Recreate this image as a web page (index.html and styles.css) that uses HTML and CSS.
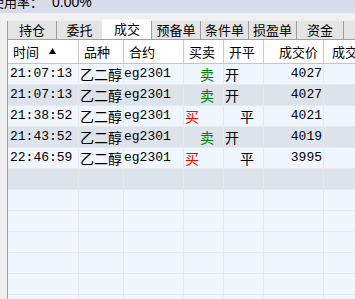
FILE: index.html
```html
<!DOCTYPE html>
<html>
<head>
<meta charset="utf-8">
<link rel="stylesheet" href="styles.css">
</head>
<body>
<div class="topbar"><span class="toptext">使用率：<span class="pct">0.00%</span></span></div>
<div class="tabs">
  <div class="tab w49">持仓</div>
  <div class="tab w46">委托</div>
  <div class="tab sel w49">成交</div>
  <div class="tab w49">预备单</div>
  <div class="tab w48">条件单</div>
  <div class="tab w48">损盈单</div>
  <div class="tab w47">资金</div>
  <div class="tab w48"></div>
</div>
<div class="grid">
  <div class="row head">
    <div class="c c1 h">时间<svg class="arrow" width="7" height="6" viewBox="0 0 7 6"><polygon points="3.5,0 7,6 0,6" fill="#000"/></svg></div>
    <div class="c c2 h">品种</div>
    <div class="c c3 h">合约</div>
    <div class="c c4 h">买卖</div>
    <div class="c c5 h">开平</div>
    <div class="c c6 h hr">成交价</div>
    <div class="c c7 h hl">成交量</div>
  </div>
  <div class="row">
    <div class="c c1 t">21:07:13</div><div class="c c2 zh">乙二醇</div><div class="c c3 t">eg2301</div>
    <div class="c c4 zh sell">卖</div><div class="c c5 zh">开</div><div class="c c6 t num">4027</div><div class="c c7"></div>
  </div>
  <div class="row alt">
    <div class="c c1 t">21:07:13</div><div class="c c2 zh">乙二醇</div><div class="c c3 t">eg2301</div>
    <div class="c c4 zh sell">卖</div><div class="c c5 zh">开</div><div class="c c6 t num">4027</div><div class="c c7"></div>
  </div>
  <div class="row">
    <div class="c c1 t">21:38:52</div><div class="c c2 zh">乙二醇</div><div class="c c3 t">eg2301</div>
    <div class="c c4 zh buy">买</div><div class="c c5 zh close">平</div><div class="c c6 t num">4021</div><div class="c c7"></div>
  </div>
  <div class="row alt">
    <div class="c c1 t">21:43:52</div><div class="c c2 zh">乙二醇</div><div class="c c3 t">eg2301</div>
    <div class="c c4 zh sell">卖</div><div class="c c5 zh">开</div><div class="c c6 t num">4019</div><div class="c c7"></div>
  </div>
  <div class="row">
    <div class="c c1 t">22:46:59</div><div class="c c2 zh">乙二醇</div><div class="c c3 t">eg2301</div>
    <div class="c c4 zh buy">买</div><div class="c c5 zh close">平</div><div class="c c6 t num">3995</div><div class="c c7"></div>
  </div>
  <div class="row alt"><div class="c c1"></div><div class="c c2"></div><div class="c c3"></div><div class="c c4"></div><div class="c c5"></div><div class="c c6"></div><div class="c c7"></div></div>
  <div class="row"><div class="c c1"></div><div class="c c2"></div><div class="c c3"></div><div class="c c4"></div><div class="c c5"></div><div class="c c6"></div><div class="c c7"></div></div>
  <div class="row"><div class="c c1"></div><div class="c c2"></div><div class="c c3"></div><div class="c c4"></div><div class="c c5"></div><div class="c c6"></div><div class="c c7"></div></div>
  <div class="row"><div class="c c1"></div><div class="c c2"></div><div class="c c3"></div><div class="c c4"></div><div class="c c5"></div><div class="c c6"></div><div class="c c7"></div></div>
  <div class="row"><div class="c c1"></div><div class="c c2"></div><div class="c c3"></div><div class="c c4"></div><div class="c c5"></div><div class="c c6"></div><div class="c c7"></div></div>
  <div class="row"><div class="c c1"></div><div class="c c2"></div><div class="c c3"></div><div class="c c4"></div><div class="c c5"></div><div class="c c6"></div><div class="c c7"></div></div>
  <div class="row"><div class="c c1"></div><div class="c c2"></div><div class="c c3"></div><div class="c c4"></div><div class="c c5"></div><div class="c c6"></div><div class="c c7"></div></div>
</div>
</body>
</html>
```
FILE: styles.css
```css
html, body {
  margin: 0;
  padding: 0;
  background: #f0f0f0;
  width: 355px;
  height: 299px;
  overflow: hidden;
  font-family: "Noto Sans CJK SC", sans-serif;
}
.topbar {
  height: 13px;
  background: #d8dbe9;
  overflow: hidden;
  white-space: nowrap;
}
.toptext {
  display: block;
  margin-top: -7px;
  margin-left: -9px;
  font-size: 13px;
  line-height: 18px;
  color: #000;
}
.pct {
  margin-left: 9px;
  font-family: "Liberation Sans", sans-serif;
  font-size: 14px;
}
.tabs {
  display: flex;
  align-items: flex-end;
  height: 26px;
  padding-left: 7px;
  box-sizing: border-box;
  white-space: nowrap;
}
.tab {
  flex: none;
  height: 18px;
  box-sizing: border-box;
  background: #e4e4e4;
  border-left: 1px solid #a0a0a0;
  font-size: 13px;
  line-height: 18px;
  text-align: center;
  color: #000;
}
.tab.sel {
  height: 20px;
  line-height: 20px;
  background: #ffffff;
  border-left: 1px solid #ffffff;
}
.w46 { width: 46px; }
.w47 { width: 47px; }
.w48 { width: 48px; }
.w49 { width: 49px; }
.grid {
  margin-left: 7px;
  border-left: 1px solid #a0a0a0;
  border-top: 1px solid #a0a0a0;
  width: 420px;
}
.row {
  display: flex;
  background: #f0f6fe;
}
.row.alt { background: #dde3ea; }
.row.head { background: #ffffff; }
.c {
  flex: none;
  box-sizing: border-box;
  height: 21px;
  border-right: 1px solid #e6e8eb;
  border-bottom: 1px solid #e6e8eb;
  white-space: nowrap;
  overflow: hidden;
  color: #000;
}
.c1 { width: 71px; }
.c2 { width: 45px; }
.c3 { width: 60px; }
.c4 { width: 40px; }
.c5 { width: 40px; }
.c6 { width: 60px; }
.c7 { width: 100px; }
.h {
  height: 24px;
  border-right: 1px solid #c9c9c9;
  border-bottom: 1px solid #c6c6c6;
  font-size: 13px;
  line-height: 23px;
  padding-left: 5px;
  display: flex;
  align-items: center;
}
.hr { justify-content: flex-end; padding-right: 5px; }
.hl { padding-left: 8px; }
.arrow { margin-left: 10px; margin-top: -1px; }
.t {
  font-family: "Liberation Mono", monospace;
  font-size: 13px;
  line-height: 20px;
  padding-left: 2px;
}
.c3.t { padding-left: 0; }
.zh {
  font-size: 14px;
  line-height: 20px;
  padding-left: 1px;
}
.num { text-align: right; padding-right: 1px; }
.sell { color: #008000; padding-left: 16px; }
.buy { color: #ff0000; padding-left: 1px; }
.close { padding-left: 16px; }
```
